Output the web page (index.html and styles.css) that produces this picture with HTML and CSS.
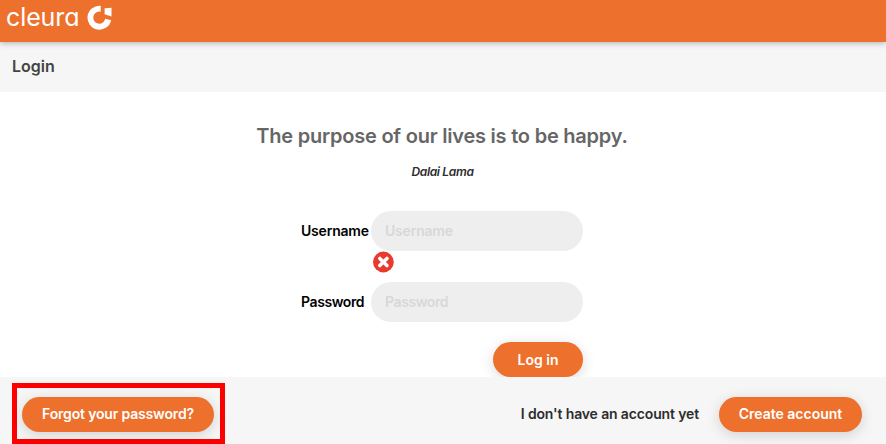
FILE: index.html
```html
<!DOCTYPE html>
<html lang="en">
<head>
<meta charset="utf-8">
<title>Cleura – Login</title>
<link rel="stylesheet" href="styles.css">
</head>
<body>
<header class="topbar">
  <span class="wordmark">cleura</span>
  <svg class="mark" width="26" height="26" viewBox="0 0 26 26">
    <path d="M14.7 1.7A12 12 0 1 0 25.2 16.2L19.2 14.8A6 6 0 1 1 14.7 7.8Z" fill="#fff"/>
    <path d="M18.6 4.2L25.5 3.8V12.4L18.6 10.2Z" fill="#fff"/>
  </svg>
</header>
<div class="titlebar"><h1 class="title">Login</h1></div>
<main class="main">
  <h2 class="quote">The purpose of our lives is to be happy.</h2>
  <p class="author">Dalai Lama</p>
  <form class="form">
    <div class="row">
      <label class="label username-label" for="username">Username</label>
      <input class="input" id="username" type="text" placeholder="Username">
    </div>
    <div class="error">
      <svg width="22" height="22" viewBox="0 0 22 22">
        <circle cx="11.4" cy="11" r="10.4" fill="#e93a2f"/>
        <path d="M7.8 7.4L15 14.6M15 7.4L7.8 14.6" stroke="#fff" stroke-width="3.5" stroke-linecap="round"/>
      </svg>
    </div>
    <div class="row">
      <label class="label password-label" for="password">Password</label>
      <input class="input" id="password" type="password" placeholder="Password">
    </div>
    <button class="button login" type="button"><span>Log in</span></button>
  </form>
</main>
<footer class="footer">
  <div class="highlight"><button class="button forgot" type="button"><span>Forgot your password?</span></button></div>
  <span class="hint">I don't have an account yet</span>
  <button class="button create" type="button"><span>Create account</span></button>
</footer>
</body>
</html>
```
FILE: styles.css
```css
* { box-sizing: border-box; }
body {
  margin: 0;
  height: 444px;
  display: flex;
  flex-direction: column;
  overflow: hidden;
  background: #fff;
  color: #2d2d2d;
  font: 600 14px/20px Inter, sans-serif;
}
.topbar {
  height: 42px;
  flex: none;
  display: flex;
  align-items: flex-start;
  padding: 4px 0 0 6px;
  background: #ed702d;
  box-shadow: 0 1px 6px rgba(0, 0, 0, .3);
  z-index: 1;
}
.wordmark {
  width: 80px;
  color: #fff;
  font: 400 25px/26px Inter, sans-serif;
  font-feature-settings: "cv11" 1;
  letter-spacing: -.1px;
  white-space: nowrap;
}
.mark { flex: none; }
.titlebar {
  height: 50px;
  flex: none;
  padding: 14px 12px;
  background: #f6f6f6;
}
.title {
  margin: 0;
  font-size: 16px;
  line-height: 20px;
  font-weight: 600;
  color: #444;
}
.main {
  height: 285px;
  flex: none;
  display: flex;
  flex-direction: column;
  align-items: center;
}
.quote {
  margin: 32px 2px 0 0;
  font-size: 20px;
  line-height: 24px;
  font-weight: 600;
  letter-spacing: -.22px;
  color: #666;
  white-space: nowrap;
}
.author {
  margin: 15px 1px 0 0;
  font-size: 12px;
  line-height: 18px;
  font-style: italic;
  letter-spacing: -.35px;
}
.form {
  width: 282px;
  margin: 30px 2px 0 0;
  display: flex;
  flex-direction: column;
}
.row {
  height: 40px;
  display: flex;
  align-items: center;
}
.label {
  width: 70px;
  color: #000;
  white-space: nowrap;
}
.username-label { letter-spacing: -.2px; }
.password-label { letter-spacing: -.4px; }
.input {
  width: 212px;
  height: 40px;
  padding: 0 14px 2px;
  border: 0;
  border-radius: 20px;
  background: #eee;
  font: inherit;
  letter-spacing: -.2px;
}
.input::placeholder { color: #d8d8d8; opacity: 1; }
#password { letter-spacing: -.4px; }
.error {
  height: 31px;
  padding-left: 71px;
}
.error svg { display: block; }
.button {
  height: 35px;
  flex: none;
  padding: 0 0 1px;
  border: 0;
  border-radius: 18px;
  background: #ed702d;
  color: #fff;
  font: inherit;
  white-space: nowrap;
  box-shadow: 0 3px 14px rgba(0, 0, 0, .15);
}
.login {
  width: 90px;
  margin-top: 20px;
  padding: 1px 0 0;
  align-self: flex-end;
}
.footer {
  height: 67px;
  flex: none;
  display: flex;
  align-items: flex-start;
  padding: 6px 24px 0 12px;
  background: #f6f6f6;
  z-index: 1;
}
.highlight {
  width: 213px;
  height: 61px;
  padding: 9px 5px;
  border: 5px solid #f00;
}
.forgot {
  width: 192px;
  letter-spacing: -.17px;
}
.hint {
  margin: 21px 20px 0 auto;
  letter-spacing: -.14px;
  white-space: nowrap;
}
.create {
  width: 143px;
  margin-top: 14px;
}
```
